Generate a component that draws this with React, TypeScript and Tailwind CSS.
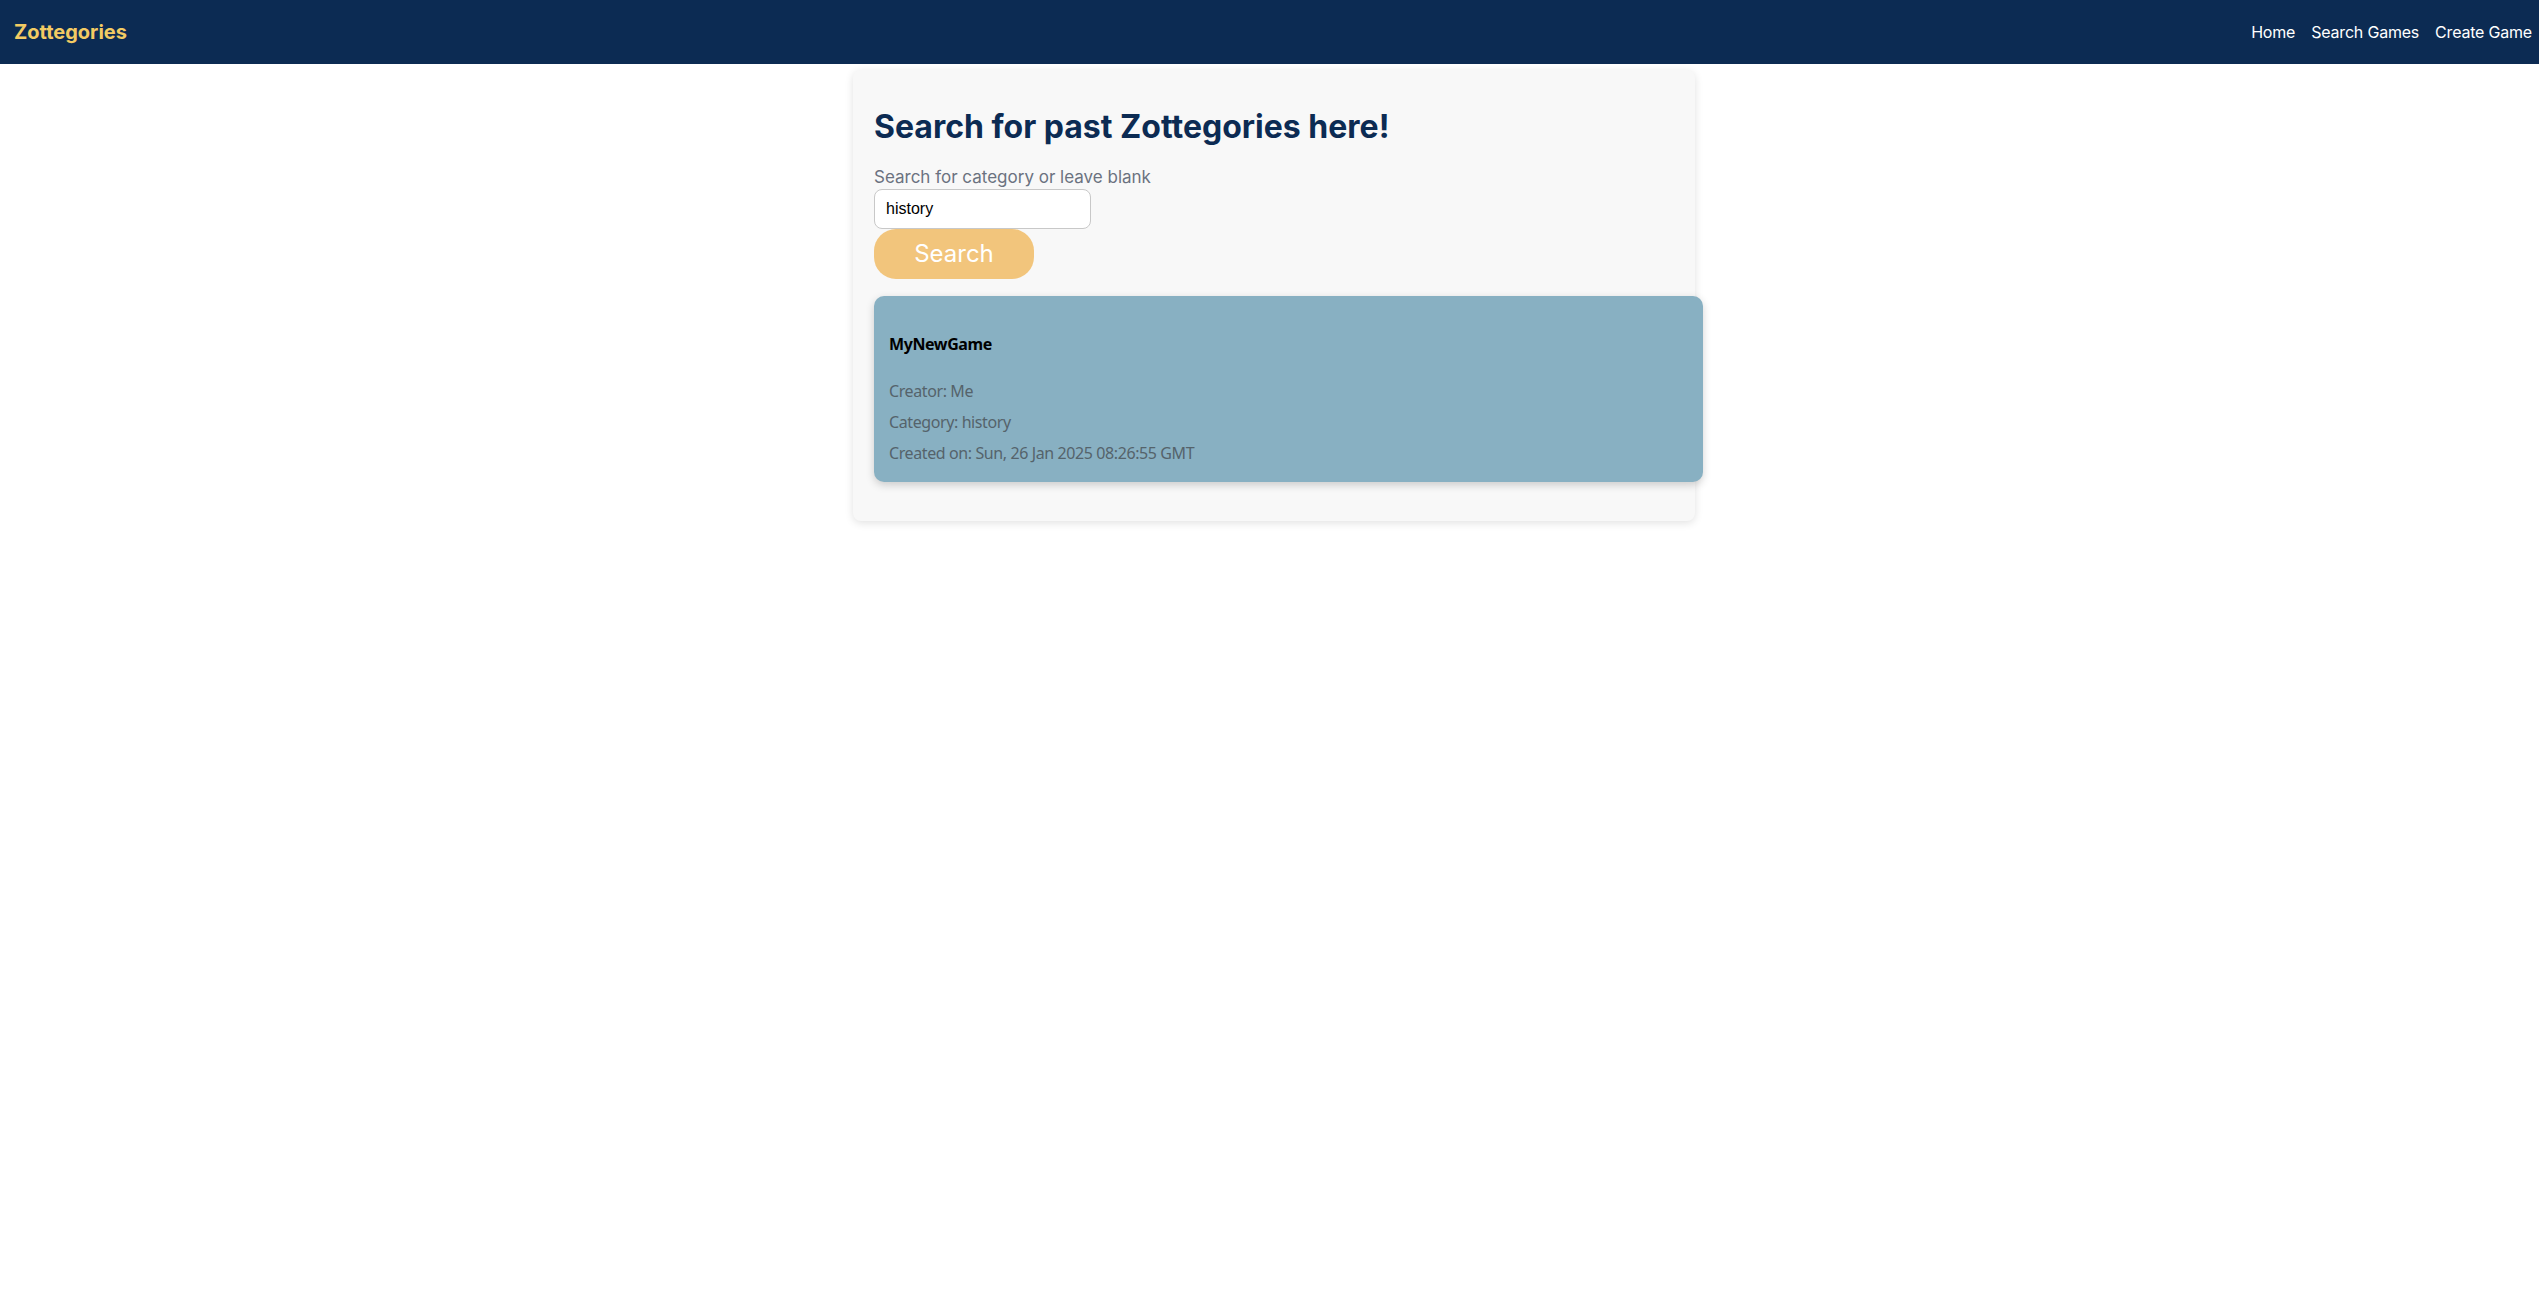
import { useState } from "react";

const games = [
  {
    name: "MyNewGame",
    creator: "Me",
    category: "history",
    createdOn: "Sun, 26 Jan 2025 08:26:55 GMT",
  },
];

function Navbar() {
  return (
    <nav className="h-[64px] bg-[#0c2b53] flex items-center justify-between pl-[14px] pr-[7px] font-['Inter',sans-serif]">
      <span className="text-[20px] font-bold text-[#f3cb63]">Zottegories</span>
      <div className="flex items-center gap-[16px] text-[16px] tracking-[-0.2px] text-white">
        <a href="#">Home</a>
        <a href="#">Search Games</a>
        <a href="#">Create Game</a>
      </div>
    </nav>
  );
}

export default function App() {
  const [query, setQuery] = useState("history");

  return (
    <div className="min-h-screen bg-white">
      <Navbar />

      <div className="flex justify-center pl-[9px] pt-[6px]">
        {/* Search card */}
        <div className="w-[842px] bg-[#f8f8f8] rounded-lg shadow-[0_2px_8px_rgba(0,0,0,0.12)] pl-[21px] pt-[37px] pb-[39px]">
          <h1 className="text-[32px] leading-[40px] font-bold text-[#0c2b53] font-['Inter',sans-serif]">
            Search for past Zottegories here!
          </h1>

          <label className="block mt-[18px] text-[17px] leading-[24px] text-[#6b7280] font-['Inter',sans-serif]">
            Search for category or leave blank
          </label>
          <input
            value={query}
            onChange={(e) => setQuery(e.target.value)}
            className="block w-[217px] h-[40px] px-[11px] bg-white border border-[#c8c8c8] rounded-lg text-[16px] text-black font-['Liberation_Sans',sans-serif] outline-none"
          />
          <button className="block w-[160px] h-[50px] rounded-[22px] bg-[#f2c57c] text-white text-[24px] font-['Inter',sans-serif]">
            Search
          </button>

          {/* Results */}
          <div className="mt-[17px] flex flex-col gap-4">
            {games.map((g) => (
              <div
                key={g.name}
                className="w-[829px] rounded-[10px] bg-[#88b0c2] shadow-[0_3px_8px_rgba(0,0,0,0.18)] pt-[36px] px-[15px] pb-[17px] font-['Noto_Sans',sans-serif] tracking-[-0.4px]"
              >
                <h3 className="text-[16px] leading-[24px] font-bold text-black">{g.name}</h3>
                <div className="mt-[23px] flex flex-col gap-[7px] text-[16px] leading-[24px] text-[#55636b]">
                  <p>Creator: {g.creator}</p>
                  <p>Category: {g.category}</p>
                  <p>Created on: {g.createdOn}</p>
                </div>
              </div>
            ))}
          </div>
        </div>
      </div>
    </div>
  );
}
